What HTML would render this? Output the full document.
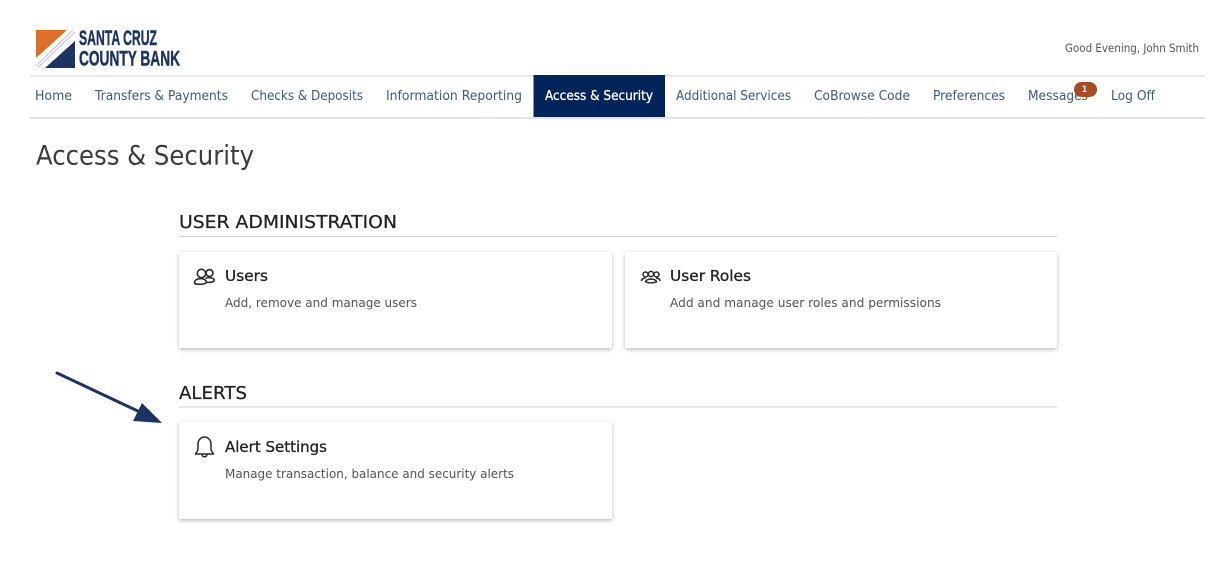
<!DOCTYPE html>
<html><head><meta charset="utf-8"><title>Access &amp; Security</title>
<style>
html,body{margin:0;padding:0;background:#fff;width:1230px;height:564px;overflow:hidden}
svg{display:block}
text{font-family:"DejaVu Sans","Liberation Sans",sans-serif}
.n{font-size:13px;fill:#3f5b7f}
.d{font-size:12.6px;fill:#555}
.h{font-size:18px;fill:#222;stroke:#222;stroke-width:.25px}
.t{font-size:15px;fill:#222;stroke:#222;stroke-width:.3px}
.l{font-family:"Liberation Sans",sans-serif;font-weight:700;font-size:21px;fill:#1d3363;stroke:#1d3363;stroke-width:.45px}
.card{fill:#fff;filter:url(#s)}
</style></head><body>
<svg width="1230" height="564" viewBox="0 0 1230 564" xmlns="http://www.w3.org/2000/svg">
<defs><filter id="s" x="-5%" y="-10%" width="110%" height="125%"><feDropShadow dx="0" dy="1.5" stdDeviation="2" flood-color="#000" flood-opacity=".28"/></filter></defs>
<rect width="1230" height="564" fill="#fff"/>
<!-- logo -->
<polygon points="36,30 67,30 36,58" fill="#dd6f2a"/>
<polygon points="75,41 75,68 45,68" fill="#1d3363"/>
<path d="M36,66 L73,30 M38,67.500 L75,32" stroke="#c0c4cf" stroke-width="1" fill="none"/>
<text class="l" x="79" y="45" textLength="78" lengthAdjust="spacingAndGlyphs">SANTA CRUZ</text>
<text class="l" x="79" y="65.500" textLength="101" lengthAdjust="spacingAndGlyphs">COUNTY BANK</text>
<text x="1065" y="52" font-size="11.500" fill="#555" textLength="134" lengthAdjust="spacingAndGlyphs">Good Evening, John Smith</text>
<!-- nav -->
<rect x="30" y="75" width="1175" height="2" fill="#e8e8e8"/>
<rect x="30" y="117" width="1175" height="2" fill="#e4e4e4"/>
<rect x="533.500" y="75" width="131.500" height="42" fill="#01245c"/>
<text class="n" x="35" y="100" textLength="37" lengthAdjust="spacingAndGlyphs">Home</text>
<text class="n" x="95" y="100" textLength="133" lengthAdjust="spacingAndGlyphs">Transfers &amp; Payments</text>
<text class="n" x="251" y="100" textLength="112" lengthAdjust="spacingAndGlyphs">Checks &amp; Deposits</text>
<text class="n" x="386" y="100" textLength="136" lengthAdjust="spacingAndGlyphs">Information Reporting</text>
<text class="n" x="545" y="100" textLength="108" lengthAdjust="spacingAndGlyphs" style="fill:#fff;stroke:#fff;stroke-width:.3px">Access &amp; Security</text>
<text class="n" x="676" y="100" textLength="115" lengthAdjust="spacingAndGlyphs">Additional Services</text>
<text class="n" x="814" y="100" textLength="96" lengthAdjust="spacingAndGlyphs">CoBrowse Code</text>
<text class="n" x="933" y="100" textLength="72" lengthAdjust="spacingAndGlyphs">Preferences</text>
<text class="n" x="1028" y="100" textLength="60" lengthAdjust="spacingAndGlyphs">Messages</text>
<text class="n" x="1111" y="100" textLength="44" lengthAdjust="spacingAndGlyphs">Log Off</text>
<rect x="1074" y="82" width="23" height="15" rx="7.500" fill="#a84a1f"/>
<text x="1084.500" y="92" font-size="8.500" font-weight="700" fill="#f3e6dc" text-anchor="middle">1</text>
<!-- title -->
<text x="36" y="164.500" font-size="27" fill="#3c3c3c" textLength="218" lengthAdjust="spacingAndGlyphs">Access &amp; Security</text>
<!-- section 1 -->
<text class="h" x="179" y="228" textLength="218" lengthAdjust="spacingAndGlyphs">USER ADMINISTRATION</text>
<rect x="179" y="236" width="878" height="1" fill="#d0d0d0"/>
<rect class="card" x="179" y="252" width="433" height="96" rx="2"/>
<rect class="card" x="625" y="252" width="432" height="96" rx="2"/>
<g fill="none" stroke="#2a2a2a" stroke-width="1.600">
<circle cx="201.500" cy="273.500" r="4.200"/><circle cx="209.500" cy="273" r="3.400"/>
<path d="M194.500,283 C194.500,279.800 198,278.600 200.500,278.600 C203.500,278.600 206.500,279.800 206.300,282.300 C206,284.700 194.800,285 194.500,283 Z"/>
<path d="M205.500,278.300 C209,276.800 214.300,278 214.300,280.300 C214.300,282 210.500,282.600 206.500,282.300"/>
</g>
<text class="t" x="225" y="281" textLength="43" lengthAdjust="spacingAndGlyphs">Users</text>
<text class="d" x="225" y="307" textLength="192" lengthAdjust="spacingAndGlyphs">Add, remove and manage users</text>
<g fill="none" stroke="#2a2a2a" stroke-width="1.500">
<circle cx="645.500" cy="274.500" r="2.500"/><circle cx="651" cy="274" r="2.600"/><circle cx="656.500" cy="274.500" r="2.500"/>
<path d="M641.500,281 C641.500,278.800 643.500,278.300 645.500,278.300 M660,281 C660,278.800 658,278.300 656,278.300"/>
<path d="M645.500,281.800 C646,278.300 656,278.300 656.500,281.800 C653,283.300 648.500,283.300 645.500,281.800 Z"/>
</g>
<text class="t" x="670" y="281" textLength="81" lengthAdjust="spacingAndGlyphs">User Roles</text>
<text class="d" x="670" y="307" textLength="271" lengthAdjust="spacingAndGlyphs">Add and manage user roles and permissions</text>
<!-- section 2 -->
<text class="h" x="179" y="399" textLength="68" lengthAdjust="spacingAndGlyphs">ALERTS</text>
<rect x="179" y="406.500" width="878" height="1" fill="#d0d0d0"/>
<rect class="card" x="179" y="422" width="433" height="97" rx="2"/>
<path d="M198,444 C198,440 201,437 204.500,437 C208,437 211,440 211,444 L211,449 C211,451.500 213,452.500 213.500,454 L195.500,454 C196,452.500 198,451.500 198,449 Z M202,454.500 C202.500,457.500 206.500,457.500 207,454.500" fill="none" stroke="#2a2a2a" stroke-width="1.500" stroke-linejoin="round"/>
<text class="t" x="225" y="452" textLength="102" lengthAdjust="spacingAndGlyphs">Alert Settings</text>
<text class="d" x="225" y="478" textLength="289" lengthAdjust="spacingAndGlyphs">Manage transaction, balance and security alerts</text>
<!-- arrow -->
<path d="M57,373 L142,413" stroke="#1d3363" stroke-width="3" stroke-linecap="round"/>
<polygon points="162,423 133,421 142,403" fill="#1d3363"/>
</svg>
</body></html>
